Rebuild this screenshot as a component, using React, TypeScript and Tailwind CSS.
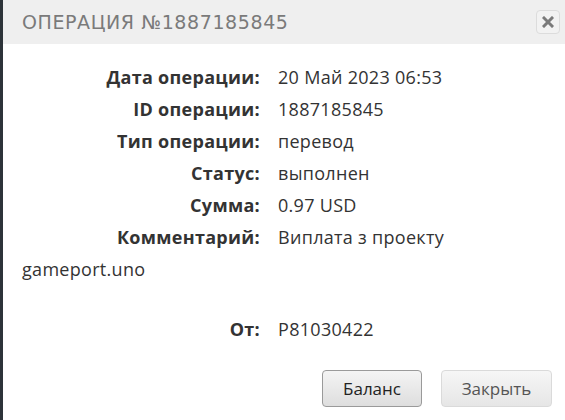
import React from 'react';

const rows = [
  { label: 'Дата операции:', value: '20 Май 2023 06:53' },
  { label: 'ID операции:', value: '1887185845' },
  { label: 'Тип операции:', value: 'перевод' },
  { label: 'Статус:', value: 'выполнен' },
  { label: 'Сумма:', value: '0.97 USD' },
  { label: 'Комментарий:', value: 'Виплата з проекту gameport.uno' },
];

const Row: React.FC<{ label: string; value: string }> = ({ label, value }) => (
  <div className="leading-[32px]">
    <span className="inline-block w-[238px] text-right font-bold mr-[18px]">{label}</span>
    {value}
  </div>
);

export default function App() {
  return (
    <div className="w-[565px] h-[420px] bg-white border-l-[3px] border-[#2d3339] flex flex-col overflow-hidden">
      {/* Header */}
      <div className="h-[44px] bg-[#efefef] flex items-center justify-between pl-[19px] pr-[5px] shrink-0">
        <span className="text-[19px] tracking-[0.6px] text-[#7a7a7a] font-['DejaVu_Sans',sans-serif]">
          ОПЕРАЦИЯ №1887185845
        </span>
        <button className="w-[24px] h-[24px] rounded-[4px] border border-[#dcdcdc] bg-[#f2f2f2] flex items-center justify-center">
          <svg width="12" height="12" viewBox="0 0 12 12">
            <path d="M2 2 L10 10 M10 2 L2 10" stroke="#7a7a7a" strokeWidth="3" strokeLinecap="square" />
          </svg>
        </button>
      </div>

      {/* Body */}
      <div className="flex-1 pt-[17px] pl-[19px] pr-[20px] text-[18px] tracking-[0.3px] text-[#333] font-['Open_Sans',sans-serif]">
        {rows.map((r) => (
          <Row key={r.label} label={r.label} value={r.value} />
        ))}
        <div className="mt-[28px]">
          <Row label="От:" value="P81030422" />
        </div>
        <div className="flex justify-end gap-[19px] mt-[25px] mr-[-7px] tracking-normal">
          <button className="w-[100px] h-[37px] rounded-[4px] border border-[#9a9a9a] bg-gradient-to-b from-[#f4f4f4] to-[#dedede] text-[17px] text-[#222]">
            Баланс
          </button>
          <button className="w-[111px] h-[37px] rounded-[4px] border border-[#dadada] bg-gradient-to-b from-[#f6f6f6] to-[#e6e6e6] text-[17px] text-[#555]">
            Закрыть
          </button>
        </div>
      </div>
    </div>
  );
}
